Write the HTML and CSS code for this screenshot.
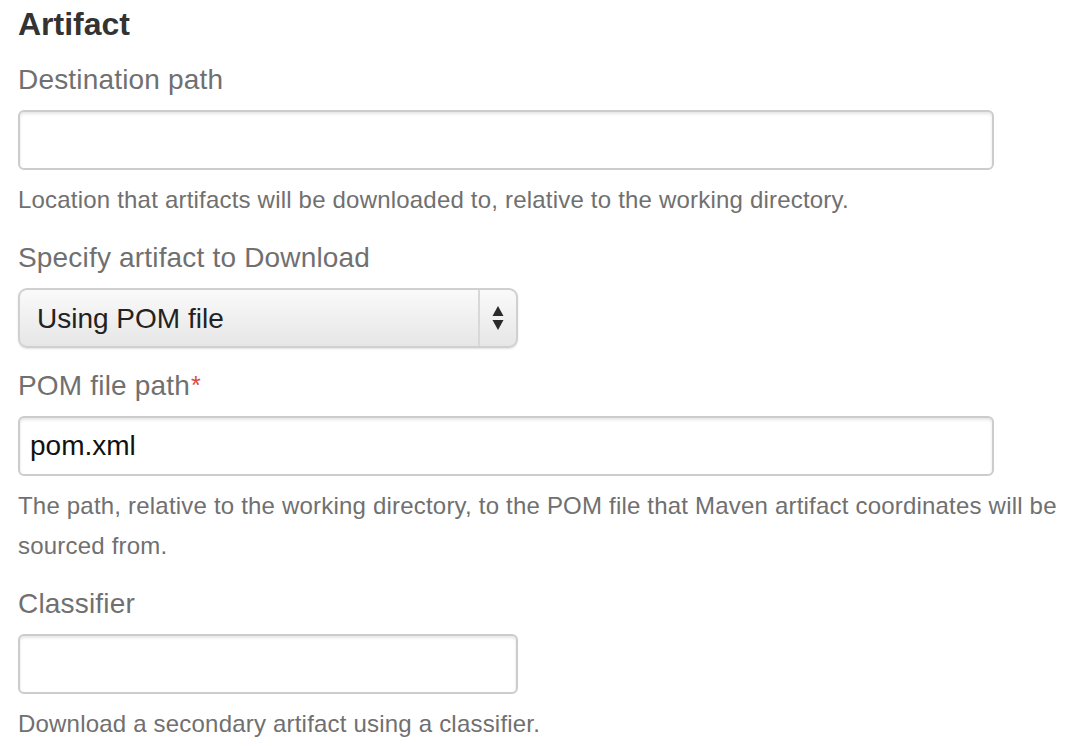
FILE: index.html
```html
<!DOCTYPE html>
<html lang="en">
<head>
    <meta charset="UTF-8">
    <title>Artifact</title>
    <link rel="stylesheet" href="styles.css">
</head>
<body>
    <form class="artifact-form">
        <h2 class="form-title">Artifact</h2>

        <!-- destination -->
        <div class="field">
            <label class="field-label" for="destPath">Destination path</label>
            <input class="text-input long" id="destPath" type="text">
            <div class="help">Location that artifacts will be downloaded to, relative to the working directory.</div>
        </div>

        <!-- artifact source -->
        <div class="field">
            <label class="field-label" for="artifactType">Specify artifact to Download</label>
            <div class="select-wrap">
                <select class="select-input" id="artifactType">
                    <option>Using POM file</option>
                    <option>Using coordinates</option>
                </select>
                <span class="select-arrows">
                    <svg width="12" height="24" viewBox="0 0 12 24">
                        <polygon points="6,0 11.5,10 0.5,10" fill="#2a2a2a"/>
                        <polygon points="0.5,14 11.5,14 6,24" fill="#2a2a2a"/>
                    </svg>
                </span>
            </div>
        </div>

        <!-- pom path -->
        <div class="field">
            <label class="field-label" for="pomPath">POM file path<span class="required">*</span></label>
            <input class="text-input long" id="pomPath" type="text" value="pom.xml">
            <div class="help">The path, relative to the working directory, to the POM file that Maven artifact coordinates will be sourced from.</div>
        </div>

        <!-- classifier -->
        <div class="field">
            <label class="field-label" for="classifier">Classifier</label>
            <input class="text-input short" id="classifier" type="text">
            <div class="help">Download a secondary artifact using a classifier.</div>
        </div>
    </form>
</body>
</html>
```

FILE: styles.css
```css
* {
    margin: 0;
    padding: 0;
    box-sizing: border-box;
}

body {
    background: #fff;
    font-family: "Liberation Sans", Arial, Helvetica, sans-serif;
}

.artifact-form {
    padding: 4px 0 0 18px;
    width: 1060px;
}

.form-title {
    font-size: 32px;
    line-height: 40px;
    font-weight: bold;
    color: #333;
    margin-bottom: 16px;
}

.field {
    display: flex;
    flex-direction: column;
    align-items: flex-start;
    margin-bottom: 18px;
}

.field-label {
    font-size: 28px;
    line-height: 40px;
    height: 40px;
    letter-spacing: 0.18px;
    color: #707070;
    margin-bottom: 10px;
}

.required {
    color: #e0483c;
    font-size: 25px;
    line-height: 0;
    vertical-align: top;
    position: relative;
    top: 19px;
    margin-left: 1px;
}

.text-input {
    height: 60px;
    border: 2px solid #ccc;
    border-radius: 6px;
    box-shadow: inset 0 2px 3px rgba(0, 0, 0, 0.1);
    font-family: inherit;
    font-size: 28px;
    color: #111;
    padding: 0 10px;
    outline: none;
    background: #fff;
}

.text-input.long {
    width: 976px;
}

.text-input.short {
    width: 500px;
}

.help {
    margin-top: 10px;
    font-size: 24px;
    line-height: 40px;
    letter-spacing: 0.2px;
    color: #707070;
    max-width: 1040px;
}

.select-wrap {
    position: relative;
    width: 500px;
    height: 60px;
}

.select-input {
    appearance: none;
    -webkit-appearance: none;
    width: 100%;
    height: 100%;
    border: 2px solid #d0d0d0;
    border-radius: 9px;
    background: linear-gradient(#fafafa, #e6e6e6);
    box-shadow: 0 1px 2px rgba(0, 0, 0, 0.12);
    font-family: inherit;
    font-size: 28px;
    color: #222;
    padding: 0 0 0 17px;
    outline: none;
}

.select-arrows {
    position: absolute;
    top: 2px;
    right: 2px;
    bottom: 2px;
    width: 38px;
    border-left: 2px solid #d8d8d8;
    display: flex;
    align-items: center;
    justify-content: center;
    pointer-events: none;
}
```
